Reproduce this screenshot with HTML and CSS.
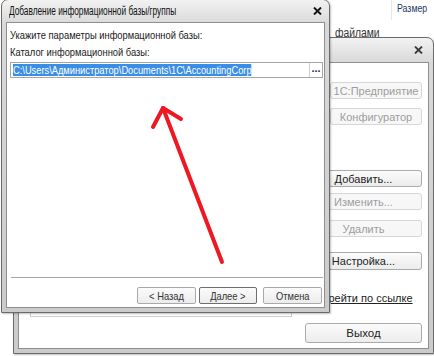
FILE: index.html
```html
<!DOCTYPE html>
<html lang="ru">
<head>
    <meta charset="UTF-8">
    <title>Добавление информационной базы</title>
    <link rel="stylesheet" href="styles.css">
</head>
<body>

<!-- Explorer window in the background -->
<div class="explorer-sep"></div>
<div class="explorer-head">Размер</div>
<div class="explorer-text">файлами</div>

<!-- 1C launcher window -->
<div class="window launcher">
    <div class="titlebar">
        <span></span>
        <svg class="close" width="9" height="8" viewBox="0 0 9 8"><path d="M1 0.5 L8 7.5 M8 0.5 L1 7.5" stroke="#3a3a3a" stroke-width="1.8"/></svg>
    </div>
    <div class="wbody launcher-body">
        <div class="list"></div>
        <div class="side">
            <div class="btn short disabled">1С:Предприятие</div>
            <div class="btn short disabled gap-9">Конфигуратор</div>
            <div class="btn gap-45">Добавить...</div>
            <div class="btn disabled gap-6">Изменить...</div>
            <div class="btn disabled gap-10">Удалить</div>
            <div class="btn tall gap-15">Настройка...</div>
            <div class="link">Перейти по ссылке</div>
            <div class="btn exit">Выход</div>
        </div>
    </div>
</div>

<!-- Add infobase dialog -->
<div class="window dialog">
    <div class="titlebar">
        <span class="title">Добавление информационной базы/группы</span>
        <svg class="close" width="9" height="8" viewBox="0 0 9 8"><path d="M1 0.5 L8 7.5 M8 0.5 L1 7.5" stroke="#111" stroke-width="1.9"/></svg>
    </div>
    <div class="wbody dialog-body">
        <div class="label first"><span>Укажите параметры информационной базы:</span></div>
        <div class="label second"><span>Каталог информационной базы:</span></div>
        <div class="path">
            <span class="sel">C:\Users\Администратор\Documents\1C\AccountingCorp</span>
            <span class="dots">...</span>
        </div>
        <div class="sep"></div>
        <div class="buttons">
            <div class="btn back"><span>&lt; Назад</span></div>
            <div class="btn next"><span>Далее &gt;</span></div>
            <div class="btn cancel"><span>Отмена</span></div>
        </div>
    </div>
</div>

<!-- Red hand-drawn arrow -->
<svg class="arrow" width="434" height="356" viewBox="0 0 434 356">
    <g stroke="#ee1822" stroke-width="4" stroke-linecap="round" fill="none">
        <path d="M222 262 L163 108"/>
        <path d="M163 108 L153 127"/>
        <path d="M163 108 L181 119"/>
    </g>
</svg>

</body>
</html>
```

FILE: styles.css
```css
body {
    margin: 0;
    width: 434px;
    height: 356px;
    overflow: hidden;
    position: relative;
    background-color: #ffffff;
    font-family: "Liberation Sans", Arial, sans-serif;
    font-size: 11px;
    color: #1a1a1a;
}

/* background explorer bits */
.explorer-sep {
    position: absolute;
    left: 391px;
    top: 0;
    width: 1px;
    height: 20px;
    background-color: #e3e8ef;
}
.explorer-head,
.explorer-text {
    position: absolute;
    line-height: 14px;
    transform-origin: left center;
}
.explorer-head {
    left: 397px;
    top: 1px;
    font-size: 11px;
    color: #1e3a5f;
    transform: scaleX(0.8);
}
.explorer-text {
    left: 335px;
    top: 26px;
    font-size: 12px;
    color: #333;
    transform: scaleX(0.86);
}

/* window frame */
.window {
    position: absolute;
    box-sizing: border-box;
    display: flex;
    flex-direction: column;
    padding: 0 4px 4px;
    border: 1px solid #6a6a6a;
    border-radius: 7px 7px 0 0;
    background: linear-gradient(#f2f2f2, #d9d9d9 24px, #cbcbcb);
    box-shadow: 1px 1px 2px rgba(0, 0, 0, 0.25);
}
.titlebar {
    display: flex;
    align-items: center;
    justify-content: space-between;
    flex-shrink: 0;
}
.title {
    color: #111;
    font-size: 12px;
    white-space: nowrap;
    display: inline-block;
    transform: scaleX(0.69);
    transform-origin: left center;
}
.wbody {
    flex: 1;
    background-color: #ffffff;
    border: 1px solid #8e8e8e;
}

/* launcher */
.launcher {
    left: 13px;
    top: 37px;
    width: 421px;
    height: 317px;
    z-index: 1;
}
.launcher .titlebar {
    height: 24px;
    padding-right: 6px;
}
.launcher-body {
    display: grid;
    grid-template-columns: 262px 117px;
    column-gap: 13px;
    padding-left: 11px;
    align-items: start;
}
.list {
    margin-top: 7px;
    height: 247px;
    border: 1px solid #cfcfcf;
    box-sizing: border-box;
}
.side {
    display: flex;
    flex-direction: column;
    padding-top: 19px;
}
.btn {
    height: 17px;
    box-sizing: border-box;
    display: flex;
    align-items: center;
    justify-content: center;
    border: 1px solid #aaaaaa;
    border-radius: 3px;
    background: linear-gradient(#fbfbfb, #ececec);
    color: #222;
    white-space: nowrap;
}
.btn.disabled {
    color: #9d9d9d;
    border-color: #d6d6d6;
    background: #f7f7f7;
}
.btn.short {
    width: 92px;
    align-self: flex-end;
}
.btn.tall {
    height: 18px;
}
.gap-6 { margin-top: 6px; }
.gap-9 { margin-top: 9px; }
.gap-10 { margin-top: 10px; }
.gap-15 { margin-top: 15px; }
.gap-45 { margin-top: 45px; }
.link {
    margin-top: 22px;
    line-height: 13px;
    text-align: center;
    text-decoration: underline;
    color: #222;
}
.btn.exit {
    margin-top: 18px;
    height: 20px;
    font-size: 11.5px;
}

/* dialog */
.dialog {
    left: 1px;
    top: -1px;
    width: 329px;
    height: 314px;
    z-index: 2;
}
.dialog .titlebar {
    height: 22px;
    padding: 0 3px 0 3px;
}
.dialog-body {
    display: flex;
    flex-direction: column;
    padding: 6px 1px 3px 3px;
}
.label {
    height: 13px;
    line-height: 13px;
    white-space: nowrap;
}
.label span {
    display: inline-block;
    transform: scaleX(0.85);
    transform-origin: left center;
}
.label.second {
    margin-top: 4px;
}
.path {
    margin-top: 3px;
    height: 16px;
    box-sizing: border-box;
    display: flex;
    align-items: center;
    padding-left: 2px;
    border: 1px solid #a5a5a5;
}
.sel {
    display: inline-block;
    background-color: #3a8ee6;
    color: #ffffff;
    line-height: 12px;
    white-space: nowrap;
    transform: scaleX(0.845);
    transform-origin: left center;
}
.dots {
    margin-left: auto;
    width: 12px;
    height: 14px;
    line-height: 10px;
    text-align: center;
    border-left: 1px solid #cfcfcf;
    color: #1b2a6b;
    font-weight: bold;
}
.sep {
    margin-top: auto;
    margin-left: 1px;
    height: 1px;
    background-color: #a6a6a6;
}
.buttons {
    display: flex;
    justify-content: flex-end;
    margin-top: 9px;
    padding-right: 1px;
}
.buttons .btn {
    color: #333;
    border-radius: 2px;
}
.buttons .btn span {
    display: inline-block;
    transform: scaleX(0.85);
}
.back { width: 59px; }
.next {
    width: 58px;
    margin-left: 3px;
    border-color: #6e6e6e;
}
.cancel {
    width: 59px;
    margin-left: 6px;
}

.arrow {
    position: absolute;
    left: 0;
    top: 0;
    z-index: 3;
    pointer-events: none;
}
```
